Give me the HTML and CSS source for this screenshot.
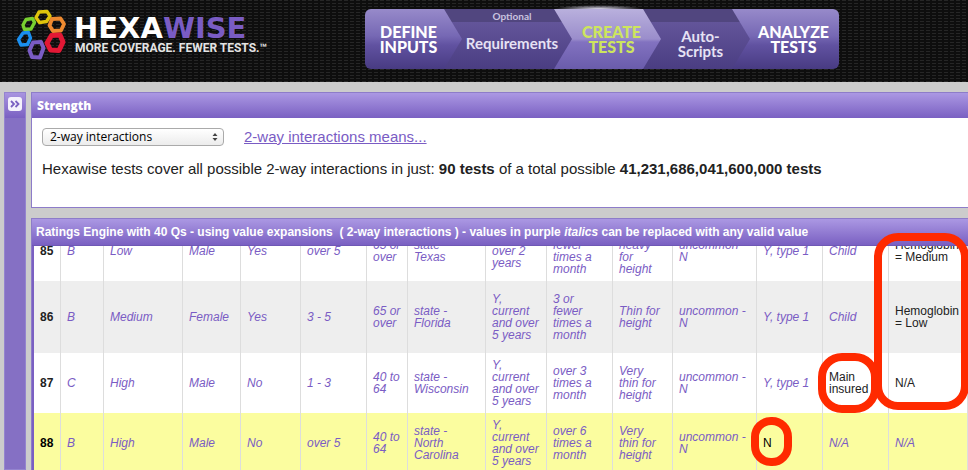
FILE: index.html
```html
<!DOCTYPE html>
<html lang="en">
<head>
<meta charset="utf-8">
<title>Hexawise - Create Tests</title>
<link rel="stylesheet" href="styles.css">
</head>
<body>
<header class="top">
  <a class="brand" href="#">
    <svg class="mark" viewBox="0 0 52 54" width="52" height="54" fill="none" stroke-width="3.4" stroke-linejoin="round" aria-hidden="true">
      <path stroke="#78d030" d="M11 11.500L17.500 10.500L19.500 14.500L16 21L9.500 21.500L8 17Z"/>
      <path stroke="#dfc40c" d="M24 4L32 3.500L35 8L31.500 13.500L24.500 14.500L21 9.500Z"/>
      <path stroke="#1a8ff0" d="M8 25L13.500 24.500L15.500 30L12.500 36.500L6 37L3.500 31.500Z"/>
      <path stroke="#ee8a30" stroke-width="3.800" d="M37 11L45.500 10.500L49 16L46 22.500L38 23L34.500 17.500Z"/>
      <path stroke="#7a5cc4" stroke-width="4" d="M18 34.500L26 34L28.500 40L25 49.500L17 49L14.500 42.500Z"/>
      <path stroke="#e31835" stroke-width="5" d="M36.500 27.500L45 27L48 34L44 42.500L35.500 42L32 35Z"/>
    </svg>
    <span class="words">
      <span class="name">HEXA<b>WISE</b></span>
      <span class="tag">MORE COVERAGE. FEWER TESTS.™</span>
    </span>
  </a>
  <nav class="steps">
    <div class="step first"><a href="#">DEFINE<br>INPUTS</a></div>
    <div class="step minor wide"><a href="#"><small>Optional</small>Requirements</a></div>
    <div class="step active"><a href="#">CREATE<br>TESTS</a></div>
    <div class="step minor"><a href="#">Auto-<br>Scripts</a></div>
    <div class="step last"><a href="#">ANALYZE<br>TESTS</a></div>
  </nav>
</header>
<div class="page">
  <aside class="side">
    <div class="side-head">
      <button class="expand" aria-label="Expand sidebar">
        <svg viewBox="0 0 14 14" width="14" height="14" fill="none" stroke="#7a60c2" stroke-width="1.800" aria-hidden="true"><path d="M3 4L6 7L3 10M7.500 4L10.500 7L7.500 10"/></svg>
      </button>
    </div>
  </aside>
  <main class="main">
    <section class="panel">
      <h2 class="bar strength">Strength</h2>
      <div class="body">
        <div class="line">
          <div class="picker">
            <select aria-label="Strength"><option>2-way interactions</option></select>
            <svg viewBox="0 0 6 10" width="6" height="10" fill="#444" aria-hidden="true"><path d="M3 1L5.500 4H.500ZM3 9L5.500 6H.500Z"/></svg>
          </div>
          <a class="means" href="#">2-way interactions means...</a>
        </div>
        <p>Hexawise tests cover all possible 2-way interactions in just: <b>90 tests</b> of a total possible <b>41,231,686,041,600,000 tests</b></p>
      </div>
    </section>
    <section class="panel results">
      <h2 class="bar">Ratings Engine with 40 Qs - using value expansions&nbsp; ( 2-way interactions ) - values in purple <i>italics</i> can be replaced with any valid value</h2>
      <div class="scroll">
        <table>
          <colgroup><col class="c27"><col class="c43"><col class="c79"><col class="c58"><col class="c60"><col class="c66"><col class="c41"><col class="c78"><col class="c61"><col class="c66"><col class="c60"><col class="c84"><col class="c66"><col class="c66"><col></colgroup>
          <tbody>
            <tr><th scope="row">85</th><td>B</td><td>Low</td><td>Male</td><td>Yes</td><td>over 5</td><td>65 or<br>over</td><td>state -<br>Texas</td><td>Y,<br>over 2<br>years</td><td>3 or<br>fewer<br>times a<br>month</td><td>Very<br>heavy<br>for<br>height</td><td>uncommon -<br>N</td><td>Y, type 1</td><td>Child</td><td class="fixed">Hemoglobin<br>= Medium</td></tr>
            <tr class="even"><th scope="row">86</th><td>B</td><td>Medium</td><td>Female</td><td>Yes</td><td>3 - 5</td><td>65 or<br>over</td><td>state -<br>Florida</td><td>Y,<br>current<br>and over<br>5 years</td><td>3 or<br>fewer<br>times a<br>month</td><td>Thin for<br>height</td><td>uncommon -<br>N</td><td>Y, type 1</td><td>Child</td><td class="fixed">Hemoglobin<br>= Low</td></tr>
            <tr><th scope="row">87</th><td>C</td><td>High</td><td>Male</td><td>No</td><td>1 - 3</td><td>40 to<br>64</td><td>state -<br>Wisconsin</td><td>Y,<br>current<br>and over<br>5 years</td><td>over 3<br>times a<br>month</td><td>Very<br>thin for<br>height</td><td>uncommon -<br>N</td><td>Y, type 1</td><td class="fixed">Main<br>insured</td><td class="fixed">N/A</td></tr>
            <tr class="hit"><th scope="row">88</th><td>B</td><td>High</td><td>Male</td><td>No</td><td>over 5</td><td>40 to<br>64</td><td>state -<br>North<br>Carolina</td><td>Y,<br>current<br>and over<br>5 years</td><td>over 6<br>times a<br>month</td><td>Very<br>thin for<br>height</td><td>uncommon -<br>N</td><td class="fixed">N</td><td>N/A</td><td>N/A</td></tr>
          </tbody>
        </table>
      </div>
      <span class="ring tall"></span>
      <span class="ring round"></span>
      <span class="ring small"></span>
    </section>
  </main>
</div>
</body>
</html>
```
FILE: styles.css
```css
* { box-sizing: border-box; }
body {
  margin: 0;
  height: 100vh;
  overflow: hidden;
  display: flex;
  flex-direction: column;
  background: #ccc;
  color: #222;
  font-family: "Liberation Sans", Arial, sans-serif;
}
a { color: inherit; text-decoration: none; }

.top {
  flex: none;
  height: 82px;
  display: flex;
  align-items: flex-start;
  background-color: #0e0e0e;
  background-image:
    linear-gradient(90deg, #0e0e0e 2px, transparent 2px),
    linear-gradient(#262626 1px, transparent 1px);
  background-size: 6px 3px;
}
.brand {
  flex: none;
  width: 365px;
  padding: 8px 0 0 15px;
  display: flex;
  gap: 7px;
}
.words { display: flex; flex-direction: column; padding-top: 7px; }
.name {
  font: 700 29px/27px "DejaVu Sans", sans-serif;
  color: #fff;
}
.name b { color: #7a5cc4; }
.tag {
  padding-left: 1px;
  font: 700 12px/12px Roboto, sans-serif;
  color: #e4e4e4;
  white-space: nowrap;
}

.steps { display: flex; padding-top: 9px; font-family: Lato, sans-serif; }
.step { position: relative; flex: none; width: 107px; margin-right: -18px; }
.step.wide { width: 128px; }
.step:nth-child(1) { z-index: 5; width: 97px; }
.step:nth-child(2) { z-index: 4; }
.step:nth-child(3) { z-index: 3; }
.step:nth-child(4) { z-index: 2; }
.step a {
  height: 60px;
  padding-left: 8px;
  display: flex;
  flex-direction: column;
  justify-content: center;
  text-align: center;
  color: #fff;
  font-size: 16px;
  line-height: 15px;
  font-weight: 900;
  background: linear-gradient(#978aca 0, #7668b4 45%, #6152a1 60%, #483b82);
  clip-path: polygon(0 0, calc(100% - 18px) 0, 100% 50%, calc(100% - 18px) 100%, 0 100%);
}
.step.first a { padding: 0 10px 0 0; border-radius: 6px 0 0 6px; }
.step.last a { padding-left: 16px; border-radius: 0 6px 6px 0; clip-path: none; }
.step.minor a {
  padding-top: 10px;
  font-size: 15px;
  font-weight: 700;
  color: #e6e2f4;
  background: linear-gradient(#51467f 0 13px, #63559a 13px, #4a3d82);
}
.step.wide a { justify-content: flex-start; padding-top: 1px; }
.step small {
  font-size: 10px;
  line-height: 12px;
  color: #c9c3df;
  margin-bottom: 14px;
}
.step.active a {
  color: #cde55d;
  background: linear-gradient(#b9b0dd, #9a8dcb 50%, #8272c0 55%, #6a5cab);
}
.step.active::before {
  content: "";
  position: absolute;
  left: 0;
  right: 18px;
  top: -4px;
  height: 8px;
  background: radial-gradient(ellipse at center, #e2def2, transparent 70%);
}

.page { flex: 1; min-height: 0; display: flex; gap: 5px; padding: 10px 0 0 4px; }
.side { flex: none; width: 22px; background: #8570c4; border: 1px solid #9484cf; }
.side-head { height: 25px; padding: 4px 3px; background: linear-gradient(#a894e0, #7a60c2); }
.expand {
  display: block;
  width: 14px;
  height: 14px;
  padding: 0;
  border: 0;
  border-radius: 3px;
  background: #f4f1fc;
}
.main { flex: 1; min-width: 0; display: flex; flex-direction: column; gap: 10px; }
.panel { flex: none; background: #fff; border: 1px solid #8d7cc9; border-right: 0; }
.bar {
  margin: 0;
  height: 25px;
  padding-left: 4px;
  color: #fff;
  font-size: 12px;
  line-height: 25px;
  font-weight: 700;
  white-space: nowrap;
  background: linear-gradient(#ab98e3, #7a60c2);
}
.strength { padding-left: 5px; font-family: "Open Sans", sans-serif; font-weight: 800; }
.body { height: 89px; padding: 10px; }
.line { display: flex; align-items: center; gap: 20px; }
.picker { position: relative; width: 182px; }
.picker select {
  display: block;
  width: 100%;
  height: 18px;
  padding: 0 7px;
  appearance: none;
  border: 1px solid #aaa;
  border-radius: 4px;
  background: linear-gradient(#fff, #ececec);
  color: #000;
  font: 12px/16px "Open Sans", sans-serif;
}
.picker svg { position: absolute; right: 6px; top: 4px; pointer-events: none; }
.means { color: #7a5cc4; font-size: 15px; line-height: 18px; text-decoration: underline; }
.body p { margin: 14px 0 0; font-size: 15px; line-height: 18px; }

.results { position: relative; flex: 1; min-height: 0; display: flex; flex-direction: column; border-bottom: 0; }
.results .bar { flex: none; height: 27px; line-height: 27px; border-bottom: 1px solid #6f58b5; }
.scroll { flex: 1; min-height: 0; overflow: hidden; border-left: 2px solid #7a60c2; }
table { width: 100%; margin-top: -25px; table-layout: fixed; border-collapse: separate; border-spacing: 0; }
td, th {
  height: 60px;
  padding: 0 0 0 6px;
  border-right: 1px solid #ddd;
  font-size: 12px;
  line-height: 12px;
  text-align: left;
  white-space: nowrap;
}
td { color: #7a5cc4; font-style: italic; }
td.fixed { color: #222; font-style: normal; }
.even td, .even th { height: 72px; background: #eee; }
.hit td, .hit th { background: #fbfd9f; }
.hit th, .hit .fixed { color: #000; }
.c27 { width: 27px; }
.c41 { width: 41px; }
.c43 { width: 43px; }
.c58 { width: 58px; }
.c60 { width: 60px; }
.c61 { width: 61px; }
.c66 { width: 66px; }
.c78 { width: 78px; }
.c79 { width: 79px; }
.c84 { width: 84px; }

.ring { position: absolute; border: 8px solid #ff2a00; pointer-events: none; }
.tall { left: 842px; top: 14px; width: 95px; height: 177px; border-radius: 24px; }
.round { left: 786px; top: 134px; width: 61px; height: 60px; border-radius: 24px; }
.small { left: 719px; top: 198px; width: 41px; height: 49px; border-radius: 20px; }
```
